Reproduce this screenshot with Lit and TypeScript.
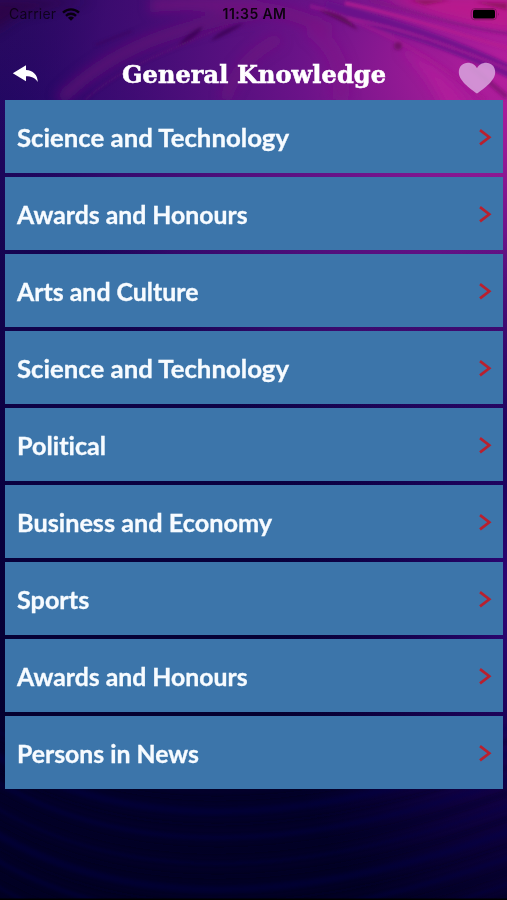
import { LitElement, html, css, svg } from "lit";
import { customElement, property } from "lit/decorators.js";

interface Category {
  label: string;
  stretch: number;
}

const CATEGORIES: Category[] = [
  { label: "Science and Technology", stretch: 1.074 },
  { label: "Awards and Honours", stretch: 1.033 },
  { label: "Arts and Culture", stretch: 1.036 },
  { label: "Science and Technology", stretch: 1.074 },
  { label: "Political", stretch: 1.05 },
  { label: "Business and Economy", stretch: 1.052 },
  { label: "Sports", stretch: 1.05 },
  { label: "Awards and Honours", stretch: 1.033 },
  { label: "Persons in News", stretch: 1.033 },
];

@customElement("paint-backdrop")
class PaintBackdrop extends LitElement {
  static styles = css`
    :host { display: block; }
    svg { display: block; width: 100%; height: 100%; }
  `;
  render() {
    // Fine strokes that curve across the dark lower part.
    const waves = Array.from({ length: 16 }, (_, i) => {
      const y = 770 + i * 13;
      return svg`<path d="M-20 ${y - 50}C120 ${y + 40} 300 ${y + 35} 530 ${y - 50}"
        stroke=${i % 2 ? "#05001a" : "#0d0050"} stroke-width=${3 + (i % 3) * 2} stroke-opacity=".28"/>`;
    });
    return html`<svg viewBox="0 0 507 900" preserveAspectRatio="none" fill="none">
      <defs>
        <linearGradient id="down" x1="0" y1="0" x2="0" y2="1">
          <stop offset="0" stop-color="#2b0a5e"/>
          <stop offset=".12" stop-color="#220762"/>
          <stop offset=".3" stop-color="#14044f"/>
          <stop offset=".55" stop-color="#09003f"/>
          <stop offset=".88" stop-color="#03002a"/>
          <stop offset="1" stop-color="#020024"/>
        </linearGradient>
        <radialGradient id="glow" gradientUnits="userSpaceOnUse" cx="0" cy="0" r="1"
          gradientTransform="translate(530 70) scale(540 400)">
          <stop offset="0" stop-color="#bb1f9e"/>
          <stop offset=".2" stop-color="#9a1b96"/>
          <stop offset=".42" stop-color="#6c1389"/>
          <stop offset=".6" stop-color="#571080" stop-opacity=".9"/>
          <stop offset=".8" stop-color="#440c78" stop-opacity=".65"/>
          <stop offset="1" stop-color="#26066a" stop-opacity="0"/>
        </radialGradient>
        <radialGradient id="low" gradientUnits="userSpaceOnUse" cx="0" cy="0" r="1"
          gradientTransform="translate(530 600) scale(270 370)">
          <stop offset="0" stop-color="#3a0785" stop-opacity=".9"/>
          <stop offset="1" stop-color="#120050" stop-opacity="0"/>
        </radialGradient>
        <filter id="soft" x="-20%" y="-50%" width="140%" height="200%"><feGaussianBlur stdDeviation="1.6"/></filter>
        <filter id="wide" x="-20%" y="-50%" width="140%" height="200%"><feGaussianBlur stdDeviation="6"/></filter>
      </defs>
      <rect width="507" height="900" fill="url(#down)"/>
      <rect width="507" height="900" fill="url(#glow)"/>
      <rect width="507" height="900" fill="url(#low)"/>
      <g filter="url(#wide)">
        <path d="M-10 0H90L20 14L-10 34Z" fill="#2c0638" opacity=".6"/>
        <path d="M60 100C110 50 170 28 260 12" stroke="#6a1278" stroke-width="12" opacity=".7"/>
        <path d="M150 6C230 0 290 8 330 30" stroke="#7a157f" stroke-width="12" opacity=".7"/>
        <path d="M225 100C235 70 255 50 280 38" stroke="#75137f" stroke-width="12" opacity=".5"/>
        <path d="M340 100C345 70 335 45 310 28" stroke="#7f1788" stroke-width="16" opacity=".6"/>
        <path d="M400 48C430 60 455 82 475 110H445C435 85 420 65 400 48Z" fill="#b01e9b"/>
        <path d="M380 -5H515V30C470 26 420 12 380 -5Z" fill="#c01a8c" opacity=".8"/>
      </g>
      <g filter="url(#soft)">
        <path d="M325 7C385 24 440 38 515 74" stroke="#65108a" stroke-width="13" opacity=".75"/>
        <path d="M345 3C410 17 460 35 515 50" stroke="#b51b91" stroke-width="3"/>
        <path d="M348 18C405 29 450 46 510 70" stroke="#a41b94" stroke-width="2"/>
        <path d="M310 6C375 23 440 62 485 100" stroke="#a51b92" stroke-width="4" opacity=".5"/>
        <path d="M370 0C420 14 468 29 512 34" stroke="#7f1483" stroke-width="2"/>
        <path d="M178 46Q187 33 203 26Q198 38 178 46ZM211 41Q218 30 244 23Q230 34 211 41Z" fill="#3b0751" opacity=".75"/>
        <path d="M318 10Q345 12 358 30Q341 21 318 10Z" fill="#55094f" opacity=".8"/>
        <circle cx="398" cy="46" r="4" fill="#6b0c62" opacity=".8"/>
        <path d="M470 66L507 97" stroke="#7a1170" stroke-width="5" opacity=".7"/>
        <path d="M410 0H450L425 5ZM475 2L507 10V3Z" fill="#850f56" opacity=".7"/>
        <path d="M95 45L132 31" stroke="#3d0858" stroke-width="1.5" opacity=".7"/>
        <path d="M85 100C120 68 165 52 230 24" stroke="#741573" stroke-width="2" opacity=".35"/>
        ${waves}
      </g>
      <rect y="898.5" width="507" height="1.5" fill="#000"/>
    </svg>`;
  }
}

@customElement("status-bar")
class StatusBar extends LitElement {
  static styles = css`
    :host {
      display: grid; grid-template-columns: 1fr auto 1fr; align-items: center;
      box-sizing: border-box; height: 28px; padding: 0 7px 0 9px;
      font: 14px/28px Inter, sans-serif; color: rgba(0, 0, 0, .88);
    }
    .carrier { display: flex; align-items: center; gap: 6px; letter-spacing: .2px; color: rgba(0, 0, 0, .68); }
    .time { font-weight: 600; letter-spacing: .4px; }
    .battery { justify-self: end; display: block; }
    svg { display: block; }
  `;
  render() {
    return html`
      <div class="carrier"><span>Carrier</span>
        <svg width="18" height="13" viewBox="0 0 18 13" fill="none" stroke="#08000e" stroke-width="2.4">
          <path d="M1 4.6C5.5.3 12.5.3 17 4.6M4 7.8C6.8 5.1 11.2 5.1 14 7.8"/>
          <path d="M9 12.8L5.9 9.8C7.6 8.2 10.4 8.2 12.1 9.8Z" fill="#08000e" stroke="none"/>
        </svg>
      </div>
      <span class="time">11:35 AM</span>
      <svg class="battery" width="30" height="13" viewBox="0 0 30 13">
        <rect x="1.2" y=".6" width="25.4" height="11.2" rx="3.5" fill="none" stroke="#000" stroke-opacity=".25"/>
        <rect x="3" y="1.8" width="22" height="8.8" rx="1.8" fill="#000"/>
        <path d="M28 4.5Q29.4 6.2 28 7.9Z" fill="#000" opacity=".35"/>
      </svg>`;
  }
}

@customElement("category-row")
class CategoryRow extends LitElement {
  @property() label = "";
  @property({ type: Number }) stretch = 1;
  static styles = css`
    :host {
      display: flex; align-items: center; justify-content: space-between;
      box-sizing: border-box; padding: 3px 11px 0 12px; background: #3c75aa;
      font: 700 24px/30px Lato, sans-serif; color: #f7fbff; white-space: nowrap;
    }
    .label { transform-origin: left; font-variant-ligatures: none; -webkit-text-stroke: .3px #f7fbff; }
    .chevron { display: block; }
  `;
  render() {
    return html`<span class="label" style="transform:scaleX(${this.stretch})">${this.label}</span>
      <svg class="chevron" width="14" height="20" viewBox="0 0 14 20">
        <path d="M2 2.2L11.3 9.2L2 16.4" fill="none" stroke="#b9202f" stroke-width="2.7"/>
      </svg>`;
  }
}

@customElement("app-root")
class AppRoot extends LitElement {
  static styles = css`
    :host { display: block; position: relative; height: 900px; overflow: hidden; }
    .backdrop { position: absolute; inset: 0; }
    .screen { position: relative; display: flex; flex-direction: column; height: 100%; }
    .header {
      display: grid; grid-template-columns: 60px 1fr 60px; align-items: center;
      height: 72px; box-sizing: border-box; padding: 18px 11px 0 12px;
    }
    .title {
      margin: 4px 0 0; text-align: center; white-space: nowrap; color: #fff;
      font: 700 24px/40px "DejaVu Serif", serif; letter-spacing: .1px; -webkit-text-stroke: .6px #fff;
    }
    .heart { justify-self: end; margin-top: 9px; }
    svg { display: block; }
    .list { display: grid; grid-template-rows: repeat(9, 73.1px); row-gap: 3.85px; padding: 0 3.6px 0 4.6px; }
  `;
  render() {
    return html`
      <paint-backdrop class="backdrop"></paint-backdrop>
      <div class="screen">
        <status-bar></status-bar>
        <header class="header">
          <svg width="27" height="20" viewBox="0 0 27 20" fill="#fff">
            <path d="M.8 10.2L14 2.2V6.9C21 7.4 25.5 11.4 25.8 19C23 14.8 19.2 13.3 14 13.3V18.2Z"/>
          </svg>
          <h1 class="title">General Knowledge</h1>
          <svg class="heart" width="38" height="32" viewBox="0 0 38 32">
            <path d="M19 31.6C15 28.3 1 19.7.8 10.4C.7 4.2 5.2.8 9.8.8C14 .8 17.4 3 19 6.3C20.6 3 24 .8 28.2.8C32.8.8 37.3 4.2 37.2 10.4C37 19.7 23 28.3 19 31.6Z" fill="#d7a0dc" fill-opacity=".88"/>
          </svg>
        </header>
        <main class="list">
          ${CATEGORIES.map((c) => html`<category-row .label=${c.label} .stretch=${c.stretch}></category-row>`)}
        </main>
      </div>`;
  }
}
